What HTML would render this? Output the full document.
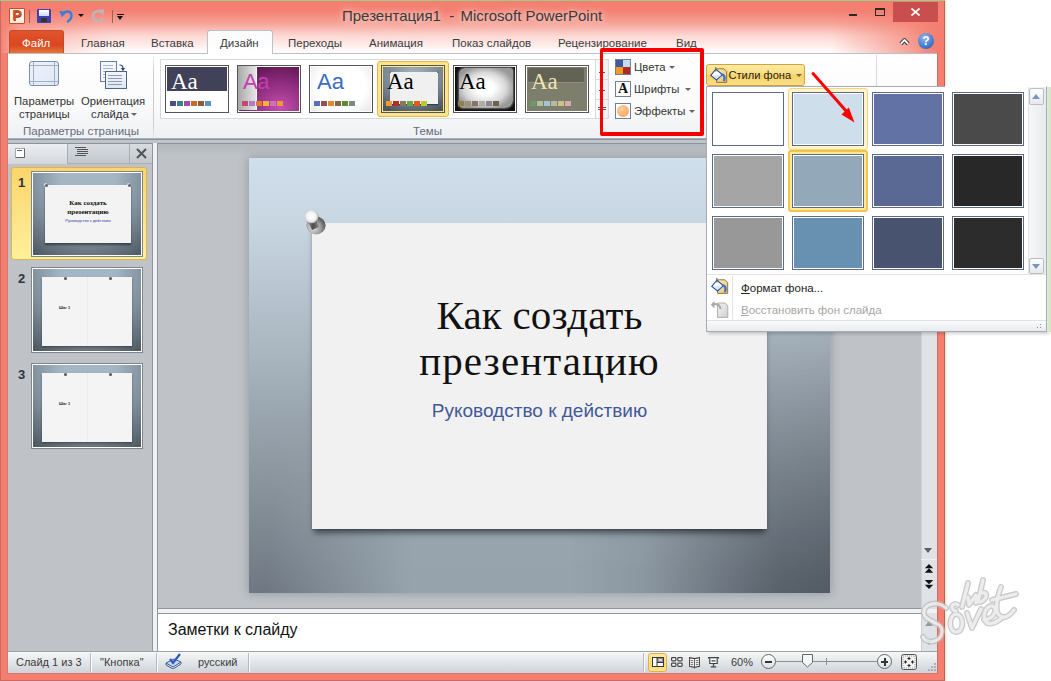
<!DOCTYPE html>
<html><head><meta charset="utf-8">
<style>
*{margin:0;padding:0;box-sizing:border-box}
html,body{width:1051px;height:681px;overflow:hidden;background:#fff;font-family:"Liberation Sans",sans-serif}
.a{position:absolute}
#win{position:absolute;left:0;top:0;width:945px;height:681px;background:#f47f70;overflow:hidden;box-shadow:inset 1px 0 #c96b60,inset 0 -1px #c96b60,inset -1px 0 #b9625a}
#title{position:absolute;left:1px;top:0;width:943px;height:53px;background:#f47f70}
#glow{position:absolute;left:0;top:0;width:945px;height:53px;background:linear-gradient(rgba(255,255,255,0) 0px,rgba(255,255,255,0) 10px,rgba(255,255,255,.25) 22px,rgba(255,255,255,.7) 36px,rgba(255,252,252,.93) 48px,#fff 53px);-webkit-mask-image:linear-gradient(90deg,transparent 0px,rgba(0,0,0,.6) 20px,#000 110px,#000 830px,rgba(0,0,0,.4) 900px,transparent 937px);mask-image:linear-gradient(90deg,transparent 0px,rgba(0,0,0,.6) 20px,#000 110px,#000 830px,rgba(0,0,0,.4) 900px,transparent 937px)}
.tab{position:absolute;top:37px;font-size:11.5px;color:#3c3c3c}
#ribbon{position:absolute;left:8px;top:53px;width:929px;height:86px;background:linear-gradient(#fff 0%,#fbfbfc 60%,#eef0f3 100%);border-top:1px solid #b9c0c8;border-bottom:1px solid #a9b0b8}
#left{position:absolute;left:8px;top:143px;width:144px;height:508px;background:#bfc3c8}
#main{position:absolute;left:158px;top:143px;width:763px;height:466px;background:#bfc3c8}
#notes{position:absolute;left:158px;top:613px;width:763px;height:38px;background:#fff;border-top:1px solid #8f959c}
#status{position:absolute;left:8px;top:651px;width:929px;height:22px;background:linear-gradient(#f6f7f8 0%,#e6e9ec 40%,#cfd3d8 100%);border-top:1px solid #9ea3aa;box-shadow:-1px 0 #d9786b,0 1px #d9786b}
.rt{font-size:11.3px;color:#343434;white-space:nowrap}
.arr{width:0;height:0;border-left:3px solid transparent;border-right:3px solid transparent;border-top:3px solid #666}
.th{top:65px;width:64px;height:48px;border:1px solid #555;padding:1px;background-clip:content-box!important;overflow:hidden}
.th::before{content:"";position:absolute;left:0;top:0;right:0;bottom:0;box-shadow:0 0 0 1px #fff}
.th .aa{position:absolute;left:5px;top:4px;font-family:"Liberation Serif";font-size:23px;line-height:24px}
.sq{position:absolute;left:4px;top:35px;width:41px;height:5px}
.thumb{position:absolute;left:32px;width:110px;height:84px;border:1px solid #fff;box-shadow:0 0 0 1px #7d858e;background:radial-gradient(ellipse 90px 95px at 55px 5px,#a4b5c4 30%,#7d8c99 65%,#4e5861 100%);overflow:hidden}
.sw{width:72px;height:54px;border:1px solid #5e6b88;box-shadow:inset 0 0 0 1px #fff}
.st{position:absolute;top:6px;font-size:11px;color:#3b3b3b}
</style></head><body>
<div id="win">
  <div id="title"></div><div id="glow"></div>
  <div class="a" style="left:0;top:0;width:1051px;height:1px;background:#9ccb8a"></div>
  <div class="a" style="left:342px;top:7px;font-size:15px;color:#3a3a3a;white-space:nowrap;text-shadow:0 0 6px rgba(255,235,232,.9),0 0 12px rgba(255,220,215,.7)">Презентация1&nbsp; -&nbsp;<span style="margin-left:2px">Microsoft PowerPoint</span></div>
  <!-- file tab -->
  <div class="a" style="left:9px;top:30px;width:55px;height:24px;background:linear-gradient(#e0552c,#d9471f 60%,#e97a3a);border:1px solid #c94a25;border-bottom:none;border-radius:3px 3px 0 0"></div>
  <div class="tab" style="left:22px;color:#fff">Файл</div>
  <div class="tab" style="left:81px">Главная</div>
  <div class="tab" style="left:151px">Вставка</div>
  <div class="a" style="left:207px;top:30px;width:66px;height:24px;background:linear-gradient(#fafbfc,#fff);border:1px solid #b9c0c8;border-bottom:none;border-radius:3px 3px 0 0;z-index:2"></div>
  <div class="tab" style="left:220px;z-index:3">Дизайн</div>
  <div class="tab" style="left:288px">Переходы</div>
  <div class="tab" style="left:369px">Анимация</div>
  <div class="tab" style="left:452px">Показ слайдов</div>
  <div class="tab" style="left:558px">Рецензирование</div>
  <div class="tab" style="left:676px">Вид</div>

  <div id="ribbon"></div>
  <!-- QAT -->
  <div class="a" style="left:9px;top:8px;width:16px;height:16px;background:linear-gradient(#fff,#fde9dc);border:1.5px solid #c9501e;border-radius:1px;font:bold 14px/13px 'Liberation Sans';color:#d9561a;text-align:center;text-shadow:0.5px 0.5px #9a3010">P</div>
  <div class="a" style="left:29px;top:10px;width:1px;height:13px;background:#8a6660"></div>
  <div class="a" style="left:37px;top:9px;width:14px;height:14px;background:#3f3fae;border-radius:1px"></div>
  <div class="a" style="left:39px;top:10px;width:10px;height:6px;background:linear-gradient(#fff,#cfd6f0)"></div>
  <div class="a" style="left:41px;top:18px;width:6px;height:4px;background:#333"></div>
  <svg class="a" style="left:59px;top:8px" width="15" height="15" viewBox="0 0 15 15"><path d="M4.5 6 C 6 2.5, 12 2.5, 12.5 7 C 13 10, 11 12, 9 13.5" fill="none" stroke="#3b7dd8" stroke-width="2.4" stroke-linecap="round"/><path d="M0.5 3 L7 3.5 L3 9.5 Z" fill="#3b7dd8"/></svg>
  <div class="a" style="left:78px;top:14px;width:0;height:0;border-left:3px solid transparent;border-right:3px solid transparent;border-top:3px solid #111"></div>
  <svg class="a" style="left:91px;top:9px" width="14" height="14" viewBox="0 0 14 14"><path d="M10.5 3.5 A 5 5 0 1 0 11.5 9" fill="none" stroke="#b8b8b8" stroke-width="2.6"/><path d="M7 0.5 L13 0.5 L12.5 7 Z" fill="#b8b8b8"/></svg>
  <div class="a" style="left:112px;top:10px;width:1px;height:13px;background:#8a6660"></div>
  <div class="a" style="left:117px;top:14px;width:7px;height:1px;background:#111"></div>
  <div class="a" style="left:117px;top:16px;width:0;height:0;border-left:3.5px solid transparent;border-right:3.5px solid transparent;border-top:4px solid #111"></div>
  <!-- window controls -->
  <div class="a" style="left:849px;top:14px;width:8px;height:2px;background:#2a2a2a"></div>
  <div class="a" style="left:875px;top:8px;width:10px;height:8px;border:1px solid #2a2a2a;border-top-width:2px"></div>
  <div class="a" style="left:893px;top:2px;width:45px;height:20px;background:#c94f4f"></div>
  <svg class="a" style="left:911px;top:8px" width="9" height="8" viewBox="0 0 9 8"><path d="M0.5 0.5 L8.5 7.5 M8.5 0.5 L0.5 7.5" stroke="#fff" stroke-width="1.6"/></svg>
  <svg class="a" style="left:899px;top:37px" width="11" height="9" viewBox="0 0 11 9"><path d="M1.8 6.8 L5.5 3 L9.2 6.8" fill="none" stroke="#333" stroke-width="3.8" stroke-linejoin="round"/><path d="M1.8 6.8 L5.5 3 L9.2 6.8" fill="none" stroke="#fff" stroke-width="1.8" stroke-linejoin="round"/></svg>
  <div class="a" style="left:918px;top:33px;width:16px;height:16px;border-radius:50%;background:radial-gradient(circle at 40% 30%,#8fb6ef,#3b6fc6 70%,#2c59a8);font:bold 12px/16px 'Liberation Sans';color:#fff;text-align:center">?</div>


  <!-- ribbon content -->
  <div class="a" style="left:0;top:0;width:945px;height:681px;pointer-events:none">
  <!-- page setup icon -->
  <div class="a" style="left:29px;top:61px;width:30px;height:25px;border:1.5px solid #7d8fae;border-radius:3px;background:linear-gradient(135deg,#eef3fa,#dfe7f2)"></div>
  <div class="a" style="left:33px;top:62px;width:1px;height:23px;background:#9fb0c8"></div>
  <div class="a" style="left:54px;top:62px;width:1px;height:23px;background:#9fb0c8"></div>
  <div class="a" style="left:30px;top:65px;width:28px;height:1px;background:#9fb0c8"></div>
  <div class="a" style="left:30px;top:81px;width:28px;height:1px;background:#9fb0c8"></div>
  <!-- orientation icon -->
  <div class="a" style="left:100px;top:61px;width:17px;height:21px;border:1px solid #6a7fa3;background:#f4f7fb"></div>
  <div class="a" style="left:103px;top:65px;width:10px;height:1px;background:#a9b6c8;box-shadow:0 3px 0 #a9b6c8,0 6px 0 #a9b6c8,0 9px 0 #a9b6c8,0 12px 0 #a9b6c8"></div>
  <div class="a" style="left:105px;top:71px;width:22px;height:18px;border:1px solid #4e6590;background:linear-gradient(#f4f7fb,#dde6f2)"></div>
  <div class="a" style="left:108px;top:75px;width:14px;height:1px;background:#8d9cb4;box-shadow:0 3px 0 #8d9cb4,0 6px 0 #8d9cb4,0 9px 0 #8d9cb4"></div>
  <svg class="a" style="left:119px;top:64px" width="7" height="8" viewBox="0 0 7 8"><path d="M0.5 1 Q 4 1, 4 4.5" fill="none" stroke="#2d4a78" stroke-width="1.2"/><path d="M1.8 4 L6.2 4 L4 7.2 Z" fill="#2d4a78"/></svg>
  <div class="a rt" style="left:14px;top:95px">Параметры</div>
  <div class="a rt" style="left:19px;top:108px">страницы</div>
  <div class="a rt" style="left:81px;top:95px">Ориентация</div>
  <div class="a rt" style="left:91px;top:108px">слайда</div>
  <div class="a arr" style="left:131px;top:113px"></div>
  <div class="a" style="left:23px;top:124.5px;font-size:11.5px;color:#666b80;white-space:nowrap">Параметры страницы</div>
  <div class="a" style="left:153px;top:55px;width:1px;height:83px;background:linear-gradient(#f4f5f7,#c9cdd2 20%,#c9cdd2 85%,#e9ebee)"></div>
  <!-- gallery -->
  <div class="a" style="left:160px;top:59px;width:449px;height:60px;border:1px solid #d6dadf;background:#fff"></div>
  <div class="a" style="left:595px;top:59px;width:14px;height:60px;border:1px solid #d6dadf;border-radius:0 2px 2px 0;background:linear-gradient(90deg,#fafbfc,#eef0f3)"></div>
  <div class="a" style="left:595px;top:79px;width:14px;height:1px;background:#d6dadf"></div>
  <div class="a" style="left:595px;top:99px;width:14px;height:1px;background:#d6dadf"></div>
  <div class="a" style="left:599px;top:72px;width:6px;height:1px;background:#555"></div>
  <div class="a" style="left:599px;top:90px;width:6px;height:1px;background:#555"></div>
  <div class="a" style="left:598px;top:107px;width:8px;height:1px;background:#555;box-shadow:0 2px 0 #555"></div>
  <!-- thumbs -->
  <div class="a th" style="left:165px;background:linear-gradient(#41425a 0,#41425a 25px,#fff 25px)"><span class="aa" style="color:#fff">Aa</span><div class="sq" style="background:linear-gradient(90deg,#4e4f86 0px 6px,transparent 6px 7px,#3f8080 7px 13px,transparent 13px 14px,#a14aa7 14px 20px,transparent 20px 21px,#c86a2a 21px 27px,transparent 27px 28px,#8a5c3a 28px 34px,transparent 34px 35px,#5a93bd 35px 41px,transparent 41px 42px,transparent 41px)"></div></div>
  <div class="a th" style="left:237px;background:radial-gradient(ellipse 55px 50px at 42px 42px,#c54fae,#8a2a7a 55%,#541248 100%)"><div class="a" style="left:0;top:0;width:19px;height:44px;background:linear-gradient(90deg,#a8a8a8,#e6e6e6);border-right:1px solid #fff"></div><span class="aa" style="color:#c23fb0;font-family:'Liberation Sans';font-size:22px;line-height:22px;top:5px;left:5px;letter-spacing:-0.5px">Aa</span><div class="sq" style="background:linear-gradient(90deg,#c94670 0px 6px,transparent 6px 7px,#b27bc3 7px 13px,transparent 13px 14px,#e07a35 14px 20px,transparent 20px 21px,#f6b23e 21px 27px,transparent 27px 28px,#c874b7 28px 34px,transparent 34px 35px,#f2943c 35px 41px,transparent 41px 42px,transparent 41px)"></div></div>
  <div class="a th" style="left:309px;background:radial-gradient(ellipse 45px 38px at 50% 45%,#fff 55%,#e2e2e2 100%)"><span class="aa" style="color:#3a6cc5;font-family:'Liberation Sans';font-size:22px;line-height:22px;top:5px;left:7px">Aa</span><div class="sq" style="background:linear-gradient(90deg,#5a70b4 0px 6px,transparent 6px 7px,#93524d 7px 13px,transparent 13px 14px,#e38a2c 14px 20px,transparent 20px 21px,#7f664c 21px 27px,transparent 27px 28px,#5d8c2e 28px 34px,transparent 34px 35px,#7a8888 35px 41px,transparent 41px 42px,transparent 41px)"></div></div>
  <div class="a" style="left:377px;top:61px;width:72px;height:56px;border:1px solid #e3b64a;border-radius:3px;background:#fde38a"></div>
  <div class="a th" style="left:381px;background:radial-gradient(ellipse 48px 40px at 50% 20%,#a3b4c3,#7a8896 60%,#4c5660)"><div class="a" style="left:8px;top:6px;width:48px;height:32px;background:#f0f0f0;box-shadow:0 1px 1px rgba(0,0,0,.4)"></div><div class="a" style="left:7px;top:5px;width:2px;height:2px;background:#777"></div><div class="a" style="left:55px;top:5px;width:2px;height:2px;background:#777"></div><span class="aa" style="color:#000;left:5px">Aa</span><div class="sq" style="background:linear-gradient(90deg,#f39a2a 0px 6px,transparent 6px 7px,#b02e28 7px 13px,transparent 13px 14px,#877663 14px 20px,transparent 20px 21px,#64a84a 21px 27px,transparent 27px 28px,#e65a18 28px 34px,transparent 34px 35px,#bcc836 35px 41px,transparent 41px 42px,transparent 41px)"></div></div>
  <div class="a th" style="left:453px;background:#111"><div class="a" style="left:5px;top:2px;width:54px;height:40px;background:radial-gradient(ellipse 30px 22px at 48% 50%,#fff 30%,#d8d8d8 70%,#999);border-radius:6px 3px 8px 4px;box-shadow:0 0 2px 1px #666"></div><span class="aa" style="color:#000;left:5px">Aa</span><div class="sq" style="background:linear-gradient(90deg,#8f7f55 0px 6px,transparent 6px 7px,#9f9276 7px 13px,transparent 13px 14px,#85766c 14px 20px,transparent 20px 21px,#aeada4 21px 27px,transparent 27px 28px,#8e8590 28px 34px,transparent 34px 35px,#6d6247 35px 41px,transparent 41px 42px,transparent 41px)"></div></div>
  <div class="a th" style="left:525px;background:#7d7e6c"><div class="a" style="left:2px;top:2px;width:56px;height:15px;background:#626354;border-radius:2px;border-bottom:1px solid #8e8f7e"></div><span class="aa" style="color:#f2e4b8">Aa</span><div class="sq" style="background:linear-gradient(90deg,#6a9a6a 0px 6px,transparent 6px 7px,#a9c2a2 7px 13px,transparent 13px 14px,#a2c5d2 14px 20px,transparent 20px 21px,#b9b7a6 21px 27px,transparent 27px 28px,#cbc28a 28px 34px,transparent 34px 35px,#dcaaae 35px 41px,transparent 41px 42px,transparent 41px)"></div></div>
  <div class="a" style="left:413px;top:125px;font-size:11.5px;color:#666b80">Темы</div>
  <!-- colors fonts effects -->
  <div class="a" style="left:615px;top:59px;width:16px;height:16px;border:1px solid #6f7f98;background:linear-gradient(90deg,#3f5aa0 50%,#c6dcef 50%) top/100% 50% no-repeat,linear-gradient(90deg,#f39a1e 50%,#ac2b22 50%) bottom/100% 50% no-repeat"></div>
  <div class="a rt" style="left:634px;top:61px">Цвета</div>
  <div class="a arr" style="left:669px;top:66px"></div>
  <div class="a" style="left:615px;top:81px;width:16px;height:16px;border:1px solid #6f7f98;background:#fff;font-family:'Liberation Serif';font-weight:bold;font-size:14px;line-height:14px;text-align:center;color:#111">A</div>
  <div class="a rt" style="left:634px;top:83px">Шрифты</div>
  <div class="a arr" style="left:685px;top:88px"></div>
  <div class="a" style="left:615px;top:103px;width:16px;height:16px;border:1px solid #6f7f98;background:#fff"></div>
  <div class="a" style="left:617px;top:105px;width:12px;height:12px;border-radius:50%;background:radial-gradient(circle at 40% 35%,#ffd0a0,#f39c4a)"></div>
  <div class="a rt" style="left:634px;top:105px">Эффекты</div>
  <div class="a arr" style="left:689px;top:110px"></div>
  <!-- red box -->
  <div class="a" style="left:600px;top:48px;width:104px;height:88px;border:4px solid #f40000;border-left-width:3.5px;border-radius:2px"></div>
  <!-- bg group -->
  <div class="a" style="left:876px;top:55px;width:1px;height:32px;background:#d5d9de"></div>
  </div>
  <div id="left"></div>
  <div id="main"></div>
  <div id="notes"></div>
  <div id="status"></div>

  <!-- left panel -->
  <div class="a" style="left:8px;top:139px;width:929px;height:5px;background:#bfc4ca;border-top:1px solid #8d939a;border-bottom:1px solid #8d939a"></div>
  <div class="a" style="left:8px;top:144px;width:60px;height:20px;background:linear-gradient(#eceef1,#d3d7dc);border-right:1px solid #a8aeb6"></div>
  <div class="a" style="left:68px;top:144px;width:62px;height:20px;background:linear-gradient(#d8dce1,#c3c8ce);border-right:1px solid #a8aeb6;border-bottom:1px solid #a8aeb6"></div>
  <div class="a" style="left:130px;top:144px;width:22px;height:20px;background:linear-gradient(#d8dce1,#c3c8ce);border-bottom:1px solid #a8aeb6"></div>
  <div class="a" style="left:15px;top:148px;width:10px;height:10px;border:1px solid #aaa;border-right-color:#666;border-bottom-color:#666;border-radius:1px;background:#fff"></div>
  <div class="a" style="left:17px;top:150px;width:5px;height:1px;background:#666"></div>
  <div class="a" style="left:75px;top:147px;width:11px;height:1px;background:#555;box-shadow:2px 2px 0 #555,2px 4px 0 #555,2px 6px 0 #555,0 8px 0 #555"></div>
  <svg class="a" style="left:136px;top:148px" width="11" height="11" viewBox="0 0 11 11"><path d="M1 1 L10 10 M10 1 L1 10" stroke="#555" stroke-width="2"/></svg>
  <div class="a" style="left:152px;top:143px;width:6px;height:508px;background:#f0f1f3;border-left:1px solid #8f959c;border-right:1px solid #8f959c"></div>
  <!-- selected slide -->
  <div class="a" style="left:11px;top:167px;width:136px;height:93px;border:1px solid #e0b44a;border-radius:3px;background:linear-gradient(#fcd56a,#fde58a 60%,#fff09a)"></div>
  <div class="a" style="left:18px;top:175px;font:bold 13px 'Liberation Sans';color:#2e3440">1</div>
  <div class="a" style="left:18px;top:271px;font:bold 13px 'Liberation Sans';color:#2e3440">2</div>
  <div class="a" style="left:18px;top:367px;font:bold 13px 'Liberation Sans';color:#2e3440">3</div>
  <div class="a thumb" style="top:172px"><div class="a" style="left:12px;top:12px;width:86px;height:58px;background:#f3f3f3;box-shadow:0 2px 2px rgba(0,0,0,.45)"></div>
    <div class="a" style="left:12px;top:11px;width:3px;height:3px;border-radius:50%;background:#666;box-shadow:-1px -1px 0 #ddd"></div><div class="a" style="left:95px;top:11px;width:3px;height:3px;border-radius:50%;background:#666;box-shadow:-1px -1px 0 #ddd"></div>
    <div class="a" style="left:0;top:26px;width:110px;text-align:center;font:bold 7px/9px 'Liberation Serif';color:#111">Как создать<br>презентацию</div>
    <div class="a" style="left:0;top:45px;width:110px;text-align:center;font:4px 'Liberation Sans';color:#2a3fa0">Руководство к действию</div></div>
  <div class="a thumb" style="top:268px"><div class="a" style="left:9px;top:8px;width:90px;height:69px;background:#f4f4f4;box-shadow:0 1px 2px rgba(0,0,0,.4)"></div><div class="a" style="left:54px;top:8px;width:1px;height:69px;background:#ececec"></div>
    <div class="a" style="left:31px;top:8px;width:3px;height:3px;border-radius:50%;background:#555"></div><div class="a" style="left:76px;top:8px;width:3px;height:3px;border-radius:50%;background:#555"></div>
    <div class="a" style="left:26px;top:37px;font:4px/4px 'Liberation Sans';color:#222;font-weight:bold;white-space:nowrap">Шаг 1</div></div>
  <div class="a thumb" style="top:364px"><div class="a" style="left:9px;top:8px;width:90px;height:69px;background:#f4f4f4;box-shadow:0 1px 2px rgba(0,0,0,.4)"></div><div class="a" style="left:54px;top:8px;width:1px;height:69px;background:#ececec"></div>
    <div class="a" style="left:31px;top:8px;width:3px;height:3px;border-radius:50%;background:#555"></div><div class="a" style="left:76px;top:8px;width:3px;height:3px;border-radius:50%;background:#555"></div>
    <div class="a" style="left:26px;top:37px;font:4px/4px 'Liberation Sans';color:#222;font-weight:bold;white-space:nowrap">Шаг 1</div></div>

  <!-- main slide -->
  <div class="a" style="left:158px;top:144px;width:763px;height:465px;background:linear-gradient(#b3b8bd,#bfc3c8 12px);border-bottom:1px solid #8f959c"></div>
  <div class="a" style="left:249px;top:158px;width:581px;height:435px;box-shadow:0 0 9px 1px rgba(60,65,75,.3);background:linear-gradient(#d0dfec 0%,#c8d6e2 15%,#a9b5bf 45%,#8c97a0 72%,#6f7882 100%)"></div>
  <div class="a" style="left:249px;top:400px;width:581px;height:193px;background:linear-gradient(90deg,rgba(155,168,177,0) 3%,rgba(155,168,177,.9) 28%,rgba(155,168,177,.9) 68%,rgba(155,168,177,0) 92%);-webkit-mask-image:linear-gradient(transparent 0%,#000 55%);mask-image:linear-gradient(transparent 0%,#000 55%)"></div>
  <div class="a" style="left:570px;top:158px;width:260px;height:435px;background:linear-gradient(90deg,rgba(20,25,35,0),rgba(20,25,35,.3));-webkit-mask-image:linear-gradient(transparent 25%,#000 95%);mask-image:linear-gradient(transparent 25%,#000 95%)"></div>
  <div class="a" style="left:312px;top:223px;width:455px;height:306px;background:#f1f1f1;box-shadow:0 6px 6px -2px rgba(20,25,30,.6),0 1px 1px rgba(0,0,0,.15)"></div>
  <div class="a" style="left:312px;top:292px;width:455px;text-align:center;font:41px/46px 'Liberation Serif';color:#111;letter-spacing:0.2px">Как создать</div>
  <div class="a" style="left:312px;top:338px;width:455px;text-align:center;font:41px/46px 'Liberation Serif';color:#111;letter-spacing:1.1px">презентацию</div>
  <div class="a" style="left:312px;top:400px;width:455px;text-align:center;font:19px 'Liberation Sans';color:#43589a">Руководство к действию</div>
  <svg class="a" style="left:302px;top:208px" width="26" height="30" viewBox="0 0 26 30"><defs>
  <radialGradient id="pb" cx="35%" cy="65%" r="70%"><stop offset="0" stop-color="#e0e0e0"/><stop offset=".55" stop-color="#a0a0a0"/><stop offset=".85" stop-color="#6a6a6a"/><stop offset="1" stop-color="#555"/></radialGradient>
  <linearGradient id="pc" x1="0" y1="0" x2="1" y2="0"><stop offset="0" stop-color="#9a9a9a"/><stop offset=".5" stop-color="#4a4a4a"/><stop offset="1" stop-color="#8a8a8a"/></linearGradient>
  <radialGradient id="ph" cx="45%" cy="45%" r="55%"><stop offset="0" stop-color="#fff"/><stop offset=".65" stop-color="#f2f2f2"/><stop offset=".88" stop-color="#c4c4c4"/><stop offset="1" stop-color="#7a7a7a"/></radialGradient></defs>
  <ellipse cx="14" cy="17.5" rx="9.6" ry="9" fill="url(#pb)"/>
  <path d="M5 11 L12 8 L17 19 L10 22 Z" fill="url(#pc)"/>
  <ellipse cx="9.8" cy="9" rx="6.9" ry="6.6" fill="url(#ph)"/>
</svg>

  <!-- vertical scrollbar -->
  <div class="a" style="left:921px;top:143px;width:16px;height:466px;background:#dfe3e8;border-left:1px solid #cdd2d8"></div>
  <div class="a" style="left:924px;top:548px;width:0;height:0;border-left:4.5px solid transparent;border-right:4.5px solid transparent;border-top:5px solid #606060"></div>
  <div class="a" style="left:921px;top:559px;width:16px;height:1px;background:#c4c9cf;border-top:1px solid #eef0f3"></div>
  <svg class="a" style="left:924px;top:564px" width="10" height="26" viewBox="0 0 10 26"><path d="M5 0 L9.2 4.3 L0.8 4.3Z M5 4.3 L9.2 8.7 L0.8 8.7Z M0.8 16 L9.2 16 L5 20.3Z M0.8 20.7 L9.2 20.7 L5 25Z" fill="#111"/></svg>

  <!-- notes -->
  <div class="a" style="left:158px;top:609px;width:779px;height:5px;background:#f0f1f3;border-bottom:1px solid #8f959c"></div>
  <div class="a" style="left:168px;top:621px;font:16px 'Liberation Sans';color:#111">Заметки к слайду</div>
  <div class="a" style="left:921px;top:613px;width:16px;height:38px;background:#fff"></div>

  <!-- status bar items -->
  <div class="st" style="left:16px;top:656px">Слайд 1 из 3</div>
  <div class="a" style="left:90px;top:653px;width:1px;height:19px;background:#b5bac0;box-shadow:1px 0 #fafbfc"></div>
  <div class="st" style="left:100px;top:656px">"Кнопка"</div>
  <div class="a" style="left:156px;top:653px;width:1px;height:19px;background:#b5bac0;box-shadow:1px 0 #fafbfc"></div>
  <svg class="a" style="left:164px;top:653px" width="19" height="16" viewBox="0 0 19 16"><path d="M2 10 L9 14 L17 9 L10 6 Z" fill="#c9d7ee" stroke="#41609a" stroke-width="1"/><path d="M2 10 L2 12 L9 16 L17 11 L17 9" fill="none" stroke="#41609a"/><path d="M6 6 L9 10 L16 1" fill="none" stroke="#2c5bb5" stroke-width="2.2"/></svg>
  <div class="st" style="left:198px;top:656px">русский</div>
  <div class="a" style="left:248px;top:653px;width:1px;height:19px;background:#b5bac0;box-shadow:1px 0 #fafbfc"></div>
  <div class="a" style="left:643px;top:653px;width:1px;height:19px;background:#b5bac0;box-shadow:1px 0 #fafbfc"></div>
  <div class="a" style="left:648px;top:653px;width:19px;height:19px;border:1px solid #e0b050;border-radius:3px;background:linear-gradient(#fde9a0,#fcd86c 60%,#fde58c)"></div>
  <svg class="a" style="left:652px;top:657px" width="12" height="10" viewBox="0 0 12 10"><rect x="0" y="0" width="12" height="10" fill="#3a3a3a"/><rect x="1" y="1" width="3.5" height="8" fill="#fff"/><rect x="5.5" y="1" width="5.5" height="4" fill="#8a8a8a"/><rect x="6.5" y="2" width="3.5" height="2" fill="#ddd"/><rect x="5.5" y="6" width="5.5" height="3" fill="#fff"/></svg>
  <svg class="a" style="left:671px;top:657px" width="12" height="10" viewBox="0 0 12 10"><g fill="#fff" stroke="#444" stroke-width="1.2"><rect x="0.6" y="0.6" width="4.3" height="3.3" rx="0.8"/><rect x="6.8" y="0.6" width="4.3" height="3.3" rx="0.8"/><rect x="0.6" y="6.1" width="4.3" height="3.3" rx="0.8"/><rect x="6.8" y="6.1" width="4.3" height="3.3" rx="0.8"/></g></svg>
  <svg class="a" style="left:689px;top:657px" width="11" height="12" viewBox="0 0 11 12"><path d="M0.6 0.6 L5.5 1.6 L10.4 0.6 L10.4 9.4 L5.5 10.4 L0.6 9.4 Z" fill="#fff" stroke="#444" stroke-width="1.1"/><path d="M5.5 1.6 L5.5 11.5 M1.8 3.5 L4.3 3.8 M1.8 5.5 L4.3 5.8 M1.8 7.5 L4.3 7.8 M6.7 3.8 L9.2 3.5 M6.7 5.8 L9.2 5.5 M6.7 7.8 L9.2 7.5" stroke="#555" stroke-width="0.9"/></svg>
  <svg class="a" style="left:708px;top:657px" width="11" height="11" viewBox="0 0 11 11"><path d="M0 0.8 L11 0.8" stroke="#444" stroke-width="1.6"/><path d="M1.8 1.5 L1.8 6.5 L9.2 6.5 L9.2 1.5" fill="#fff" stroke="#444" stroke-width="1.2"/><path d="M3.5 3.8 L7.5 3.8 M5.5 6.5 L5.5 9.6 M2.8 9.8 L8.2 9.8" stroke="#444" stroke-width="1.2"/></svg>
  <div class="st" style="left:731px;top:656px">60%</div>
  <div class="a" style="left:761px;top:654px;width:15px;height:15px;border:1px solid #666;border-radius:50%;background:linear-gradient(#fff,#dde0e4)"></div>
  <div class="a" style="left:765px;top:661px;width:7px;height:2px;background:#333"></div>
  <div class="a" style="left:776px;top:661px;width:101px;height:1px;background:#8a8f96"></div>
  <div class="a" style="left:826px;top:658px;width:1px;height:7px;background:#8a8f96"></div>
  <svg class="a" style="left:802px;top:654px" width="11" height="14" viewBox="0 0 11 14"><path d="M0.5 0.5 L10.5 0.5 L10.5 8.5 L5.5 13 L0.5 8.5 Z" fill="#f5f6f7" stroke="#666"/></svg>
  <div class="a" style="left:877px;top:654px;width:15px;height:15px;border:1px solid #666;border-radius:50%;background:linear-gradient(#fff,#dde0e4)"></div>
  <div class="a" style="left:881px;top:661px;width:7px;height:2px;background:#333"></div>
  <div class="a" style="left:883.5px;top:658px;width:2px;height:8px;background:#333"></div>
  <svg class="a" style="left:901px;top:654px" width="16" height="16" viewBox="0 0 16 16"><rect x="0.5" y="0.5" width="15" height="15" rx="2" fill="#f2f2f2" stroke="#555"/><rect x="2" y="2" width="12" height="12" fill="none" stroke="#999" stroke-dasharray="1 1"/><path d="M8 3 L8 6 M6.5 4.5 L9.5 4.5 M8 10 L8 13 M6.5 11.5 L9.5 11.5 M3 8 L6 8 M4.5 6.5 L4.5 9.5 M10 8 L13 8 M11.5 6.5 L11.5 9.5" stroke="#222" stroke-width="1"/></svg>
  <div class="a" style="left:928px;top:669px;width:2px;height:2px;background:#aab0b8;box-shadow:3px 0 #aab0b8,3px -3px #aab0b8,6px 0 #aab0b8,6px -3px #aab0b8,6px -6px #aab0b8"></div>
</div>

<div class="a" style="left:7px;top:53px;width:1px;height:621px;background:#d9776a"></div>
<div class="a" style="left:937px;top:53px;width:1px;height:621px;background:#d36b5e"></div>
<div class="a" style="left:7px;top:673px;width:931px;height:1px;background:#d9776a"></div>
<div class="a" style="left:945px;top:0;width:2px;height:681px;background:linear-gradient(90deg,#efe3cc,#fbf6ee)"></div>
<!-- background styles dropdown -->
<div class="a" style="left:706px;top:64px;width:99px;height:22px;border:1px solid #d3a43c;border-radius:3px;background:linear-gradient(#fdeaa4,#fbdc7a 50%,#fad062 51%,#fbe08a)"></div>
<svg class="a" style="left:709px;top:66px" width="19" height="18" viewBox="0 0 19 18"><defs><linearGradient id="pga" x1="0" y1="0" x2="1" y2="1"><stop offset="0" stop-color="#fdf0c0"/><stop offset="1" stop-color="#e5bd6a"/></linearGradient></defs><path d="M7.6 2.8 L15 2.8 L17.7 5.5 L17.7 16.4 L7.6 16.4 Z" fill="url(#pga)" stroke="#8a6a30" stroke-width="0.9"/><path d="M1.8 9.4 L6.8 3.2 L13.4 8.6 L7.6 14 Z" fill="#fff" stroke="#2a4f9a" stroke-width="1.1"/><path d="M3.2 9.6 L12 8.9 L7.6 12.8 Z" fill="#d6e4f7"/><path d="M12.8 8.4 Q 16.5 9.5 15.2 14.2" fill="none" stroke="#3b72d2" stroke-width="2.3" stroke-linecap="round"/><path d="M6.8 1 L6.8 5.5" stroke="#666" stroke-width="1.1"/></svg>
<div class="a" style="left:728.5px;top:69px;font-size:11.1px;color:#222;white-space:nowrap">Стили фона</div>
<div class="a arr" style="left:796px;top:73.5px"></div>
<div class="a" style="left:706px;top:86px;width:341px;height:246px;border:1px solid #a8adb5;border-top-color:#fff;background:#fff;box-shadow:2px 2px 3px rgba(0,0,0,.18)"></div>
<div class="a" style="left:706px;top:86px;width:239px;height:1px;background:#a8adb5"></div>
<div class="a" style="left:1028px;top:87px;width:18px;height:187px;background:linear-gradient(90deg,#f6f7f8,#e8eaed);border-left:1px solid #e2e5e8"></div>
<div class="a" style="left:1029px;top:88px;width:15px;height:17px;border:1px solid #b9bec5;border-radius:2px;background:linear-gradient(#fbfcfd,#e6e9ed)"></div>
<div class="a" style="left:1032px;top:94px;width:0;height:0;border-left:4.5px solid transparent;border-right:4.5px solid transparent;border-bottom:5px solid #7f93bf"></div>
<div class="a" style="left:1029px;top:258px;width:15px;height:16px;border:1px solid #b9bec5;border-radius:2px;background:linear-gradient(#fbfcfd,#e6e9ed)"></div>
<div class="a" style="left:1032px;top:264px;width:0;height:0;border-left:4.5px solid transparent;border-right:4.5px solid transparent;border-top:5px solid #7f93bf"></div>
<div class="a" style="left:788px;top:88px;width:80px;height:62px;border:1px solid #f5d67a;border-radius:3px;background:#fff6d0"></div>
<div class="a" style="left:788px;top:150px;width:80px;height:62px;border:2px solid #f2c34a;border-radius:3px;background:#fde8a0"></div>
<div class="a sw" style="left:712px;top:92px;background:#fff"></div>
<div class="a sw" style="left:792px;top:92px;background:#cfdeeb"></div>
<div class="a sw" style="left:872px;top:92px;background:#6272a5"></div>
<div class="a sw" style="left:952px;top:92px;background:#4a4a4a"></div>
<div class="a sw" style="left:712px;top:154px;background:#a5a5a5"></div>
<div class="a sw" style="left:792px;top:154px;background:#93a8b9"></div>
<div class="a sw" style="left:872px;top:154px;background:#5a6993"></div>
<div class="a sw" style="left:952px;top:154px;background:#282828"></div>
<div class="a sw" style="left:712px;top:216px;background:#989898"></div>
<div class="a sw" style="left:792px;top:216px;background:#6891b1"></div>
<div class="a sw" style="left:872px;top:216px;background:#47536f"></div>
<div class="a sw" style="left:952px;top:216px;background:#2c2c2c"></div>
<div class="a" style="left:707px;top:274px;width:339px;height:1px;background:#e2e4e7"></div>
<div class="a" style="left:732px;top:276px;width:1px;height:44px;background:#e2e4e7"></div>
<svg class="a" style="left:710px;top:277px" width="19" height="18" viewBox="0 0 19 18"><defs><linearGradient id="pgb" x1="0" y1="0" x2="1" y2="1"><stop offset="0" stop-color="#fdf0c0"/><stop offset="1" stop-color="#e5bd6a"/></linearGradient></defs><path d="M7.6 2.8 L15 2.8 L17.7 5.5 L17.7 16.4 L7.6 16.4 Z" fill="url(#pgb)" stroke="#8a6a30" stroke-width="0.9"/><path d="M1.8 9.4 L6.8 3.2 L13.4 8.6 L7.6 14 Z" fill="#fff" stroke="#2a4f9a" stroke-width="1.1"/><path d="M3.2 9.6 L12 8.9 L7.6 12.8 Z" fill="#d6e4f7"/><path d="M12.8 8.4 Q 16.5 9.5 15.2 14.2" fill="none" stroke="#3b72d2" stroke-width="2.3" stroke-linecap="round"/><path d="M6.8 1 L6.8 5.5" stroke="#666" stroke-width="1.1"/></svg>
<div class="a" style="left:741px;top:282px;font-size:11.5px;color:#222;white-space:nowrap"><u>Ф</u>ормат фона...</div>
<svg class="a" style="left:710px;top:300px" width="19" height="18" viewBox="0 0 19 18"><defs><linearGradient id="rg" x1="0" y1="0" x2="1" y2="1"><stop offset="0" stop-color="#f4f4f4"/><stop offset="1" stop-color="#cfcfcf"/></linearGradient></defs><path d="M7.5 3 L15 3 L17.8 5.8 L17.8 17.4 L7.5 17.4 Z" fill="url(#rg)" stroke="#a8a8a8" stroke-width="0.9"/><path d="M2 4.5 C 6 3.5, 10 4, 10.5 9" fill="none" stroke="#a9a9a9" stroke-width="2"/><path d="M0.8 4.8 L4.5 1 L4.5 8.5 Z" fill="#a9a9a9"/></svg>
<div class="a" style="left:741px;top:303.5px;font-size:11.5px;color:#a6a6a6;white-space:nowrap"><u>В</u>осстановить фон слайда</div>
<div class="a" style="left:707px;top:320px;width:339px;height:11px;border-top:1px solid #dfe2e6;background:linear-gradient(#fafbfc,#e9ecef)"></div>
<div class="a" style="left:1037px;top:327px;width:1px;height:1px;background:#8a9099;box-shadow:3px 0 #8a9099,3px -3px #8a9099"></div>

<!-- notes scrollbar arrows -->
<div class="a" style="left:921px;top:613px;width:16px;height:38px;background:#dfe3e8;border-left:1px solid #cdd2d8"></div>
<div class="a" style="left:925px;top:621px;width:0;height:0;border-left:4px solid transparent;border-right:4px solid transparent;border-bottom:5px solid #8f9a98"></div>
<div class="a" style="left:925px;top:640px;width:0;height:0;border-left:4px solid transparent;border-right:4px solid transparent;border-top:5px solid #8f9a98"></div>
<!-- watermark -->
<svg class="a" style="left:915px;top:575px;opacity:.9" width="105" height="75" viewBox="0 0 105 75">
<g fill="none" stroke-linecap="round" stroke-linejoin="round">
<g stroke="#b8b8b8" stroke-width="6" opacity=".8">
<path d="M31 33 C 22 25, 7 29, 9 39 C 11 48, 28 46, 27 57 C 26 67, 12 70, 8 62"/>
<path d="M41 39 C 34 40, 33 56, 41 57 C 49 57, 50 40, 41 39"/>
<path d="M52 38 L57 53 L66 34"/>
<path d="M69 45 C 77 44, 83 37, 79 32 C 74 28, 67 37, 70 45 C 72 51, 80 49, 88 42"/>
<path d="M86 12 C 81 25, 79 40, 87 42 C 91 43, 96 39, 99 35 M77 25 L101 19"/>
<path d="M43 30 C 37 26, 34 35, 41 36 M47 32 L53 8 M53 22 L54 30 L61 20 L61 28 M63 27 L68 5 M65 19 C 71 15, 75 21, 66 27"/>
</g>
<g stroke="#ececec" stroke-width="3.2">
<path d="M31 33 C 22 25, 7 29, 9 39 C 11 48, 28 46, 27 57 C 26 67, 12 70, 8 62"/>
<path d="M41 39 C 34 40, 33 56, 41 57 C 49 57, 50 40, 41 39"/>
<path d="M52 38 L57 53 L66 34"/>
<path d="M69 45 C 77 44, 83 37, 79 32 C 74 28, 67 37, 70 45 C 72 51, 80 49, 88 42"/>
<path d="M86 12 C 81 25, 79 40, 87 42 C 91 43, 96 39, 99 35 M77 25 L101 19"/>
<path d="M43 30 C 37 26, 34 35, 41 36 M47 32 L53 8 M53 22 L54 30 L61 20 L61 28 M63 27 L68 5 M65 19 C 71 15, 75 21, 66 27"/>
</g></g></svg>
<!-- green line at right -->
<div class="a" style="left:1047px;top:87px;width:4px;height:245px;background:linear-gradient(90deg,#dfeed6,#cfe6c3)"></div>
<!-- red arrow -->
<svg class="a" style="left:808px;top:68px" width="56" height="58" viewBox="0 0 56 58"><path d="M5 5.5 L39 44" stroke="#f00" stroke-width="3" stroke-linecap="round"/><path d="M46.5 54.5 L33.5 46.5 L40.8 39.5 Z" fill="#f00"/></svg>
</body></html>
